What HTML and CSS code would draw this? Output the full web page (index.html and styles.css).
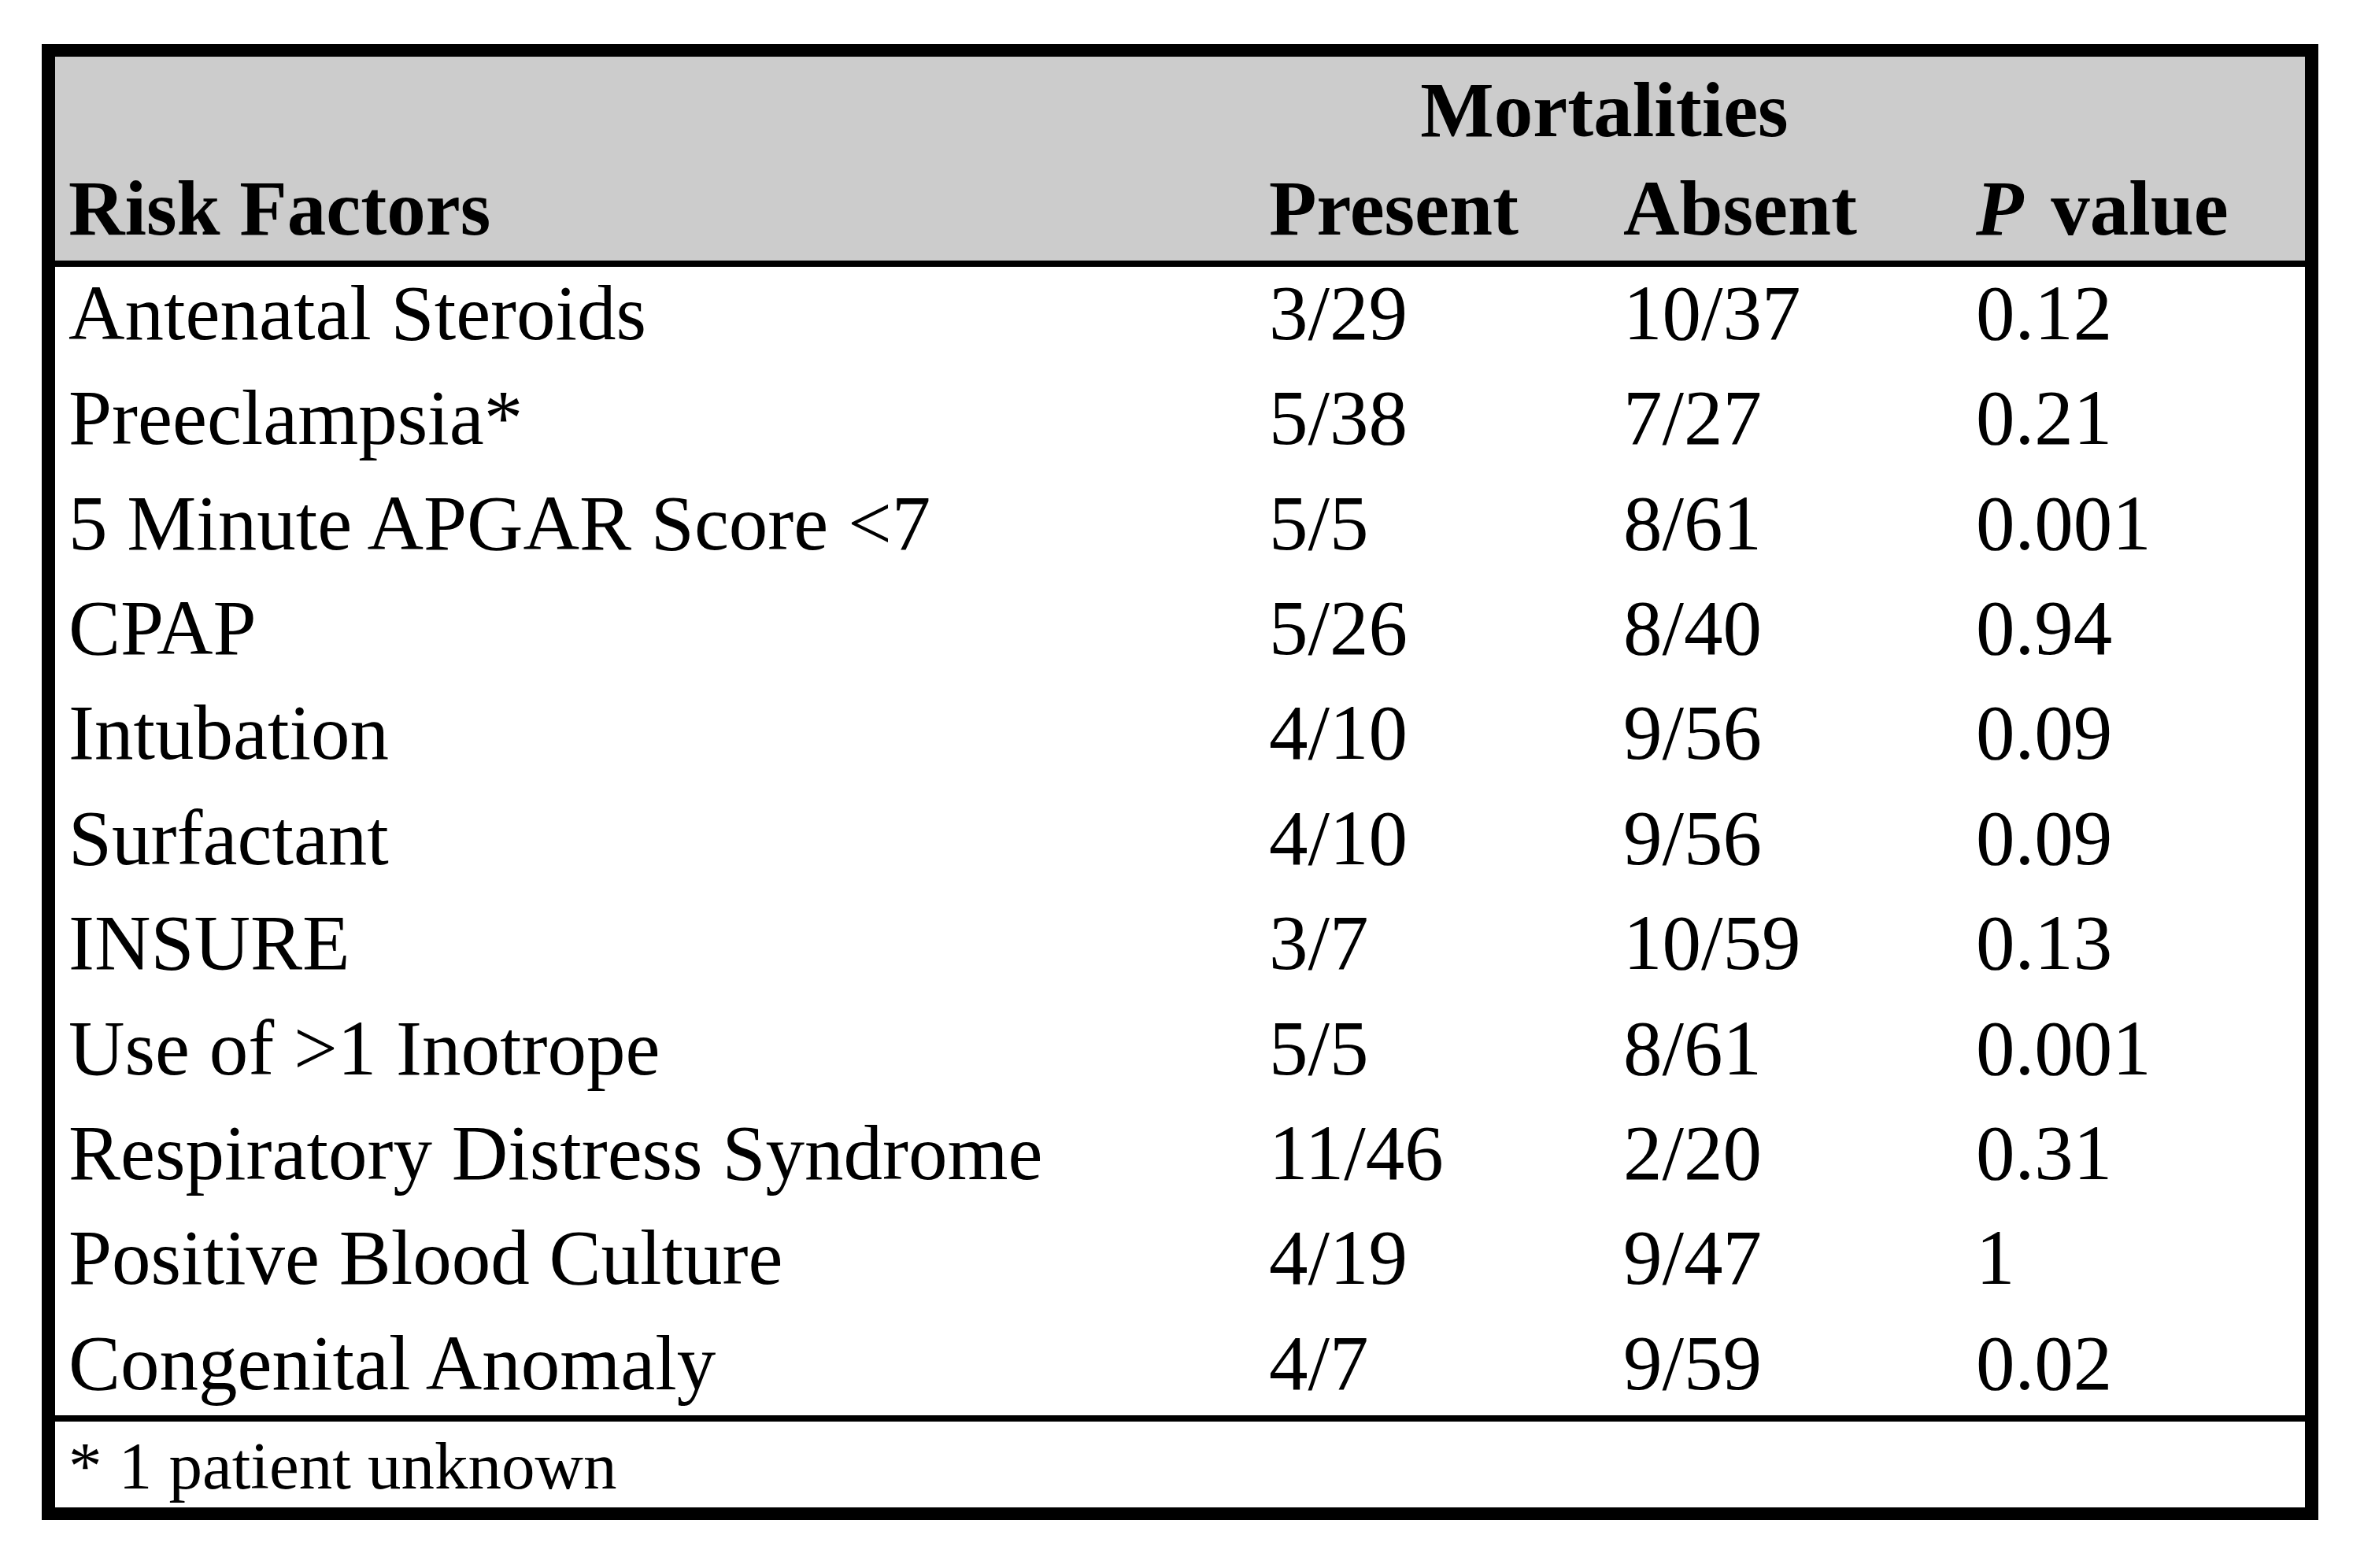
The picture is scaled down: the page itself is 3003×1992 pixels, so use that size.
FILE: index.html
```html
<!DOCTYPE html>
<html lang="en">
<head>
<meta charset="utf-8">
<title>Risk Factors and Mortalities</title>
<link rel="stylesheet" href="styles.css">
</head>
<body>
<div class="table">
  <div class="head">
    <div class="hrow hrow-top">
      <div class="cell"></div>
      <div class="cell span">Mortalities</div>
      <div class="cell"></div>
    </div>
    <div class="hrow hrow-bottom">
      <div class="cell">Risk Factors</div>
      <div class="cell">Present</div>
      <div class="cell">Absent</div>
      <div class="cell"><i class="pval">P</i> value</div>
    </div>
  </div>
  <div class="body">
    <div class="row"><div class="cell">Antenatal Steroids</div><div class="cell">3/29</div><div class="cell">10/37</div><div class="cell">0.12</div></div>
    <div class="row"><div class="cell">Preeclampsia*</div><div class="cell">5/38</div><div class="cell">7/27</div><div class="cell">0.21</div></div>
    <div class="row"><div class="cell">5 Minute APGAR Score &lt;7</div><div class="cell">5/5</div><div class="cell">8/61</div><div class="cell">0.001</div></div>
    <div class="row"><div class="cell">CPAP</div><div class="cell">5/26</div><div class="cell">8/40</div><div class="cell">0.94</div></div>
    <div class="row"><div class="cell">Intubation</div><div class="cell">4/10</div><div class="cell">9/56</div><div class="cell">0.09</div></div>
    <div class="row"><div class="cell">Surfactant</div><div class="cell">4/10</div><div class="cell">9/56</div><div class="cell">0.09</div></div>
    <div class="row"><div class="cell">INSURE</div><div class="cell">3/7</div><div class="cell">10/59</div><div class="cell">0.13</div></div>
    <div class="row"><div class="cell">Use of &gt;1 Inotrope</div><div class="cell">5/5</div><div class="cell">8/61</div><div class="cell">0.001</div></div>
    <div class="row"><div class="cell">Respiratory Distress Syndrome</div><div class="cell">11/46</div><div class="cell">2/20</div><div class="cell">0.31</div></div>
    <div class="row"><div class="cell">Positive Blood Culture</div><div class="cell">4/19</div><div class="cell">9/47</div><div class="cell">1</div></div>
    <div class="row"><div class="cell">Congenital Anomaly</div><div class="cell">4/7</div><div class="cell">9/59</div><div class="cell">0.02</div></div>
  </div>
  <div class="foot">* 1 patient unknown</div>
</div>
</body>
</html>
```
FILE: styles.css
```css
html, body {
  margin: 0;
  padding: 0;
  background: #ffffff;
}
body {
  padding: 56px 0 0 53px;
  font-family: "Liberation Serif", "Times New Roman", serif;
  color: #000000;
}
.table {
  width: 2858px;
  border-style: solid;
  border-color: #000000;
  border-width: 16px 17px 16px 17px;
}
.head {
  background: #cccccc;
  border-bottom: 8px solid #000000;
  font-weight: bold;
  font-size: 99px;
  line-height: 99px;
}
.hrow, .row {
  display: grid;
  grid-template-columns: 1525px 450px 448px 1fr;
}
.cell {
  padding-left: 17px;
  white-space: nowrap;
}
.pval {
  margin-right: 10px;
}
.hrow-top {
  grid-template-columns: 1525px 898px 1fr;
  height: 143px;
  padding-top: 18px;
  box-sizing: border-box;
}
.hrow-top .span {
  padding-left: 0;
  padding-right: 12px;
  text-align: center;
}
.hrow-bottom {
  height: 116px;
}
.body {
  font-size: 99px;
  line-height: 99px;
}
.row {
  height: 133.4px;
  padding-top: 8.8px;
  box-sizing: border-box;
}
.row:last-child {
  height: 125.4px;
}
.foot {
  border-top: 8px solid #000000;
  height: 117px;
  box-sizing: border-box;
  padding: 13.5px 0 0 17px;
  font-size: 85px;
  line-height: 85px;
}
```
